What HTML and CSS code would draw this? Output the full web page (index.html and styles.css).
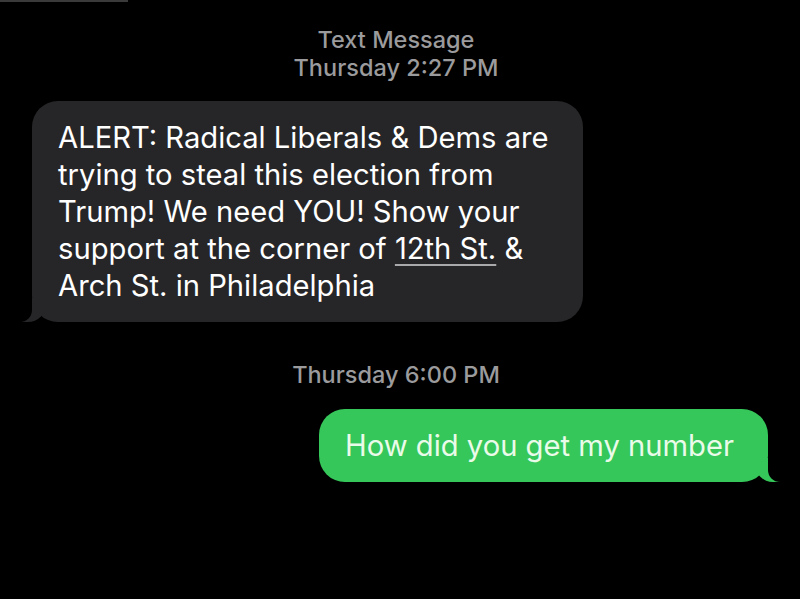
FILE: index.html
```html
<!DOCTYPE html>
<html lang="en">
<head>
    <meta charset="UTF-8">
    <meta name="viewport" content="width=device-width, initial-scale=1.0">
    <title>Messages</title>
    <link rel="stylesheet" href="styles.css">
</head>
<body>
<div class="edge"></div>
<div class="thread">
    <div class="stamp stamp-top">
        <div>Text Message</div>
        <div>Thursday 2:27 PM</div>
    </div>
    <div class="bubble received">
        ALERT: Radical Liberals &amp; Dems are trying to steal this election from Trump! We need YOU! Show your support at the corner of <span class="link">12th St.</span> &amp; Arch St. in Philadelphia
    </div>
    <div class="stamp stamp-mid">Thursday 6:00 PM</div>
    <div class="bubble sent">How did you get my number</div>
</div>
</body>
</html>
```

FILE: styles.css
```css
body {
    margin: 0;
    background: #000;
    font-family: "Inter", "Liberation Sans", sans-serif;
    height: 100vh;
    overflow: hidden;
}

.edge {
    width: 128px;
    height: 2px;
    background: #3a3a3a;
}

.thread {
    display: flex;
    flex-direction: column;
}

.stamp {
    text-align: center;
    color: #9b9b9d;
    font-size: 23.5px;
    line-height: 28px;
    font-weight: 500;
    padding-right: 8px;
}

.stamp-top {
    padding-top: 24px;
}

.stamp-mid {
    margin-top: 39px;
}

.bubble {
    position: relative;
    font-size: 29.2px;
    line-height: 37px;
    color: #fff;
    padding: 18px 26px;
    border-radius: 26px;
}

.received {
    align-self: flex-start;
    margin: 19px 0 0 32px;
    width: 499px;
    background: #262628;
}

.sent {
    align-self: flex-end;
    margin: 20px 32px 0 0;
    padding-right: 34px;
    background: #35c75a;
    color: #eafbe9;
}

.link {
    text-decoration: underline;
    text-decoration-color: #a9a9ab;
    text-underline-offset: 5px;
    text-decoration-thickness: 1.5px;
}

/* tails */
.bubble::before,
.bubble::after {
    content: "";
    position: absolute;
    bottom: 0;
    height: 24px;
}

.received::before {
    left: -10px;
    width: 24px;
    background: #262628;
    border-bottom-right-radius: 18px;
}

.received::after {
    left: -14px;
    width: 14px;
    background: #000;
    border-bottom-right-radius: 12px;
}

.sent::before {
    right: -13px;
    width: 26px;
    background: #35c75a;
    border-bottom-left-radius: 18px;
}

.sent::after {
    right: -17px;
    width: 17px;
    background: #000;
    border-bottom-left-radius: 12px;
}
```
